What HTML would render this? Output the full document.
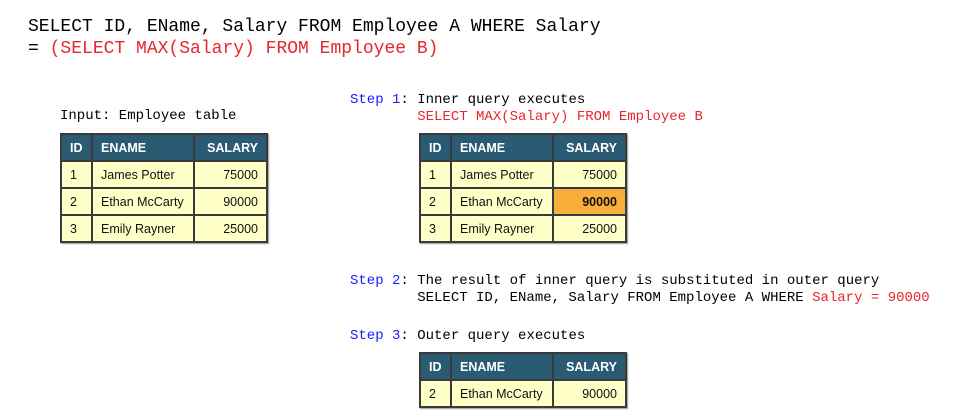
<!DOCTYPE html>
<html><head><style>
body{margin:0;width:960px;height:420px;background:#fff;position:relative;overflow:hidden}
.m{position:absolute;font-family:"Liberation Mono",monospace;white-space:pre;color:#000}
.big{font-size:18px;line-height:22px}
.sm{font-size:14px;line-height:17px}
.r{color:#e8262b}.b{color:#1a1aff}
table{position:absolute;border-collapse:collapse;font-family:"Liberation Sans",Arial,sans-serif;font-size:12.5px;box-shadow:1px 1px 1px #999}
td,th{border:2px solid #3a3a3a;height:25px;padding:0 8px;background:#ffffc8;color:#111}
th{background:#2b5b73;color:#fff;font-weight:bold;text-align:left}
.n{text-align:right}
.id{width:13px}.en{width:84px}.sa{width:55px}
.o{background:#f9ae3b;font-weight:bold}
</style></head><body>
<div class="m big" style="left:28px;top:16px">SELECT ID, EName, Salary FROM Employee A WHERE Salary
= <span class="r">(SELECT MAX(Salary) FROM Employee B)</span></div>
<div class="m sm" style="left:60px;top:108px">Input: Employee table</div>
<div class="m sm" style="left:350px;top:92px"><span class="b">Step 1</span>: Inner query executes
        <span class="r">SELECT MAX(Salary) FROM Employee B</span></div>
<div class="m sm" style="left:350px;top:273px"><span class="b">Step 2</span>: The result of inner query is substituted in outer query
        SELECT ID, EName, Salary FROM Employee A WHERE <span class="r">Salary = 90000</span></div>
<div class="m sm" style="left:350px;top:328px"><span class="b">Step 3</span>: Outer query executes</div>
<table style="left:60px;top:133px">
<tr><th class="id">ID</th><th class="en">ENAME</th><th class="sa n">SALARY</th></tr>
<tr><td>1</td><td>James Potter</td><td class="n">75000</td></tr>
<tr><td>2</td><td>Ethan McCarty</td><td class="n">90000</td></tr>
<tr><td>3</td><td>Emily Rayner</td><td class="n">25000</td></tr>
</table>
<table style="left:419px;top:133px">
<tr><th class="id">ID</th><th class="en">ENAME</th><th class="sa n">SALARY</th></tr>
<tr><td>1</td><td>James Potter</td><td class="n">75000</td></tr>
<tr><td>2</td><td>Ethan McCarty</td><td class="n o">90000</td></tr>
<tr><td>3</td><td>Emily Rayner</td><td class="n">25000</td></tr>
</table>
<table style="left:419px;top:352px">
<tr><th class="id">ID</th><th class="en">ENAME</th><th class="sa n">SALARY</th></tr>
<tr><td>2</td><td>Ethan McCarty</td><td class="n">90000</td></tr>
</table>
</body></html>
